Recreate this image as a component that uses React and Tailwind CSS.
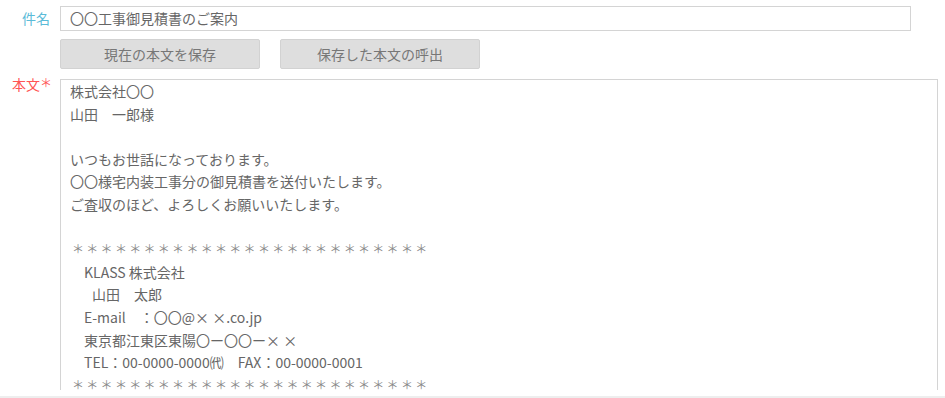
const font = { fontFamily: '"Noto Sans CJK JP", "Noto Sans", sans-serif' }

const bodyLines = [
  { text: '株式会社〇〇' },
  { text: '山田　一郎様' },
  { text: '' },
  { text: 'いつもお世話になっております。' },
  { text: '〇〇様宅内装工事分の御見積書を送付いたします。' },
  { text: 'ご査収のほど、よろしくお願いいたします。' },
  { text: '' },
  { text: '＊＊＊＊＊＊＊＊＊＊＊＊＊＊＊＊＊＊＊＊＊＊＊＊＊', stars: true },
  { text: 'KLASS 株式会社', indent: 'pl-[14px]' },
  { text: '山田　太郎', indent: 'pl-[22px]' },
  { text: 'E-mail　：〇〇@× ×.co.jp', indent: 'pl-[14px]' },
  { text: '東京都江東区東陽〇ー〇〇ー× ×', indent: 'pl-[14px]' },
  { text: 'TEL：00-0000-0000㈹　FAX：00-0000-0001', indent: 'pl-[14px]' },
  { text: '＊＊＊＊＊＊＊＊＊＊＊＊＊＊＊＊＊＊＊＊＊＊＊＊＊', stars: true },
]

function Field({ label, labelClass, children }) {
  return (
    <div className="flex">
      <div className={`w-[60px] shrink-0 pr-[10px] text-right text-[14px] ${labelClass}`}>{label}</div>
      <div className="flex-1">{children}</div>
    </div>
  )
}

export default function App() {
  return (
    <div className="w-[945px] h-[398px] overflow-hidden bg-white text-[#666]" style={font}>
      <div className="pt-[6px] flex flex-col">
        <Field label="件名" labelClass="text-[#5bbbd8] leading-[25px]">
          <div className="w-[851px] h-[25px] border border-[#d4d4d4] px-[9px] text-[14px] leading-[23px] text-[#666]">
            〇〇工事御見積書のご案内
          </div>
        </Field>

        <div className="mt-[8px] pl-[60px] flex gap-[20px]">
          <button className="w-[200px] h-[30px] bg-[#dedede] border border-[#d2d2d2] rounded-[2px] text-[14px] text-[#777]">
            現在の本文を保存
          </button>
          <button className="w-[200px] h-[30px] bg-[#dedede] border border-[#d2d2d2] rounded-[2px] text-[14px] text-[#777]">
            保存した本文の呼出
          </button>
        </div>

        <div className="mt-[10px]">
          <Field
            label={
              <span className="flex justify-end items-start">
                <span>本文</span>
                <span className="text-[12px] leading-[12px] w-[10px] text-center">＊</span>
              </span>
            }
            labelClass="text-[#f55] leading-[14px] -mt-[2px] pr-[8px]"
          >
            <div className="w-[878px] h-[311px] overflow-hidden border border-b-0 border-[#d4d4d4] px-[9px] text-[14px] leading-[22.6px] whitespace-pre">
              {bodyLines.map((line, i) => (
                <div
                  key={i}
                  className={`${line.indent || ''} ${line.stars ? 'text-[#888] text-[12px] tracking-[2.3px] pl-[2px]' : ''} h-[22.6px]`}
                >
                  {line.text}
                </div>
              ))}
            </div>
          </Field>
        </div>

        <div className="mt-[6px] h-[2px] bg-[#eeeeee]" />
      </div>
    </div>
  )
}
